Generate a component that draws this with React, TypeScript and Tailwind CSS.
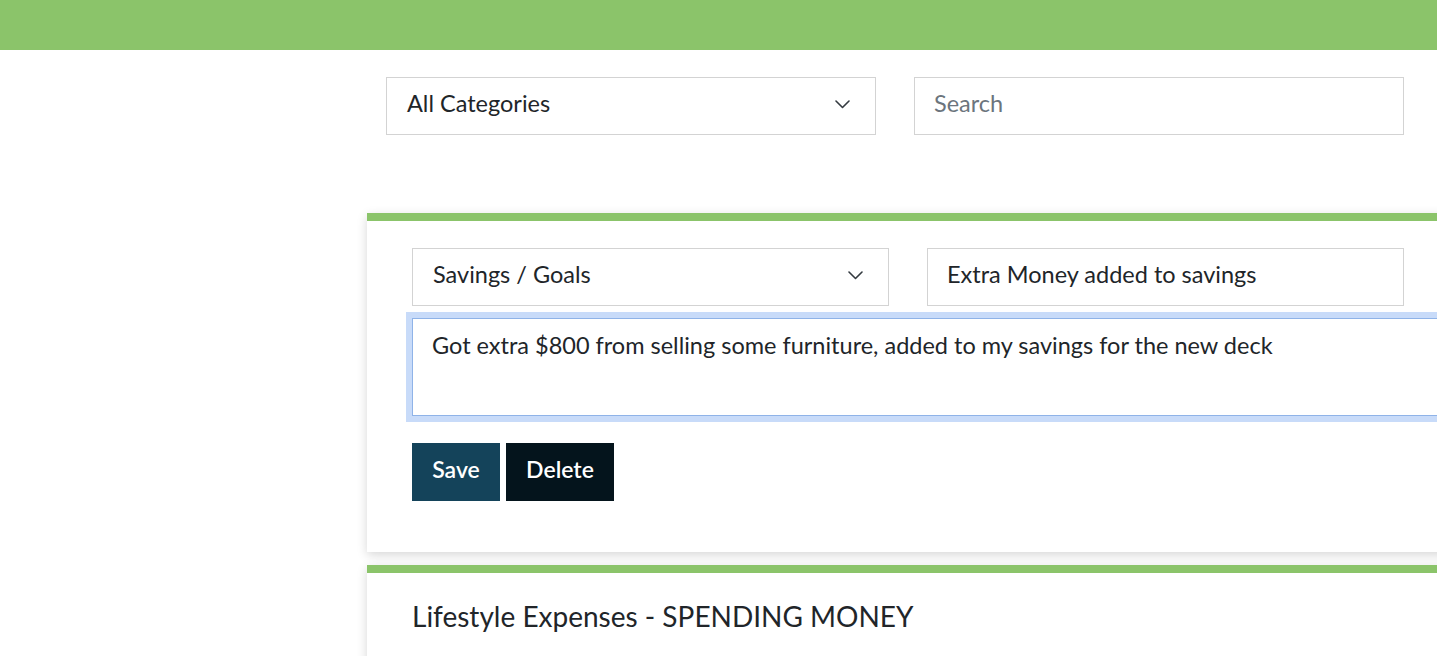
import { FC, ReactNode } from "react"

const Chevron = () => (
  <svg width="15" height="9" viewBox="0 0 15 9" fill="none" className="shrink-0">
    <polyline points="1,1 7.5,7.5 14,1" stroke="#343a40" strokeWidth="1.6" strokeLinecap="round" strokeLinejoin="round" />
  </svg>
)

const SelectBox: FC<{ label: string; width: string }> = ({ label, width }) => (
  <div
    className={`flex h-[58px] ${width} shrink-0 items-center justify-between border border-[#d3d3d3] bg-white pb-[4px] pl-[20px] pr-[25px] text-[23.5px]`}
  >
    <span>{label}</span>
    <Chevron />
  </div>
)

const TextBox: FC<{ children: ReactNode; width: string; muted?: boolean }> = ({ children, width, muted }) => (
  <div
    className={`flex h-[58px] ${width} shrink-0 items-center border border-[#d3d3d3] bg-white px-[19px] pb-[4px] text-[23.5px] ${muted ? "text-[#6c757d]" : ""}`}
  >
    {children}
  </div>
)

export default function App() {
  return (
    <div className="h-[656px] w-full overflow-hidden bg-white font-['Lato','Noto_Sans',sans-serif] text-[#212529]">
      <header className="h-[50px] bg-[#8bc46a]" />

      <div className="flex">
        <aside className="w-[367px] shrink-0" />

        <main className="w-[1200px] shrink-0">
          <div className="flex gap-[38px] pl-[19px] pt-[27px]">
            <SelectBox label="All Categories" width="w-[490px]" />
            <TextBox width="w-[490px]" muted>
              Search
            </TextBox>
          </div>

          <section className="mt-[78px] border-t-[8px] border-[#8bc46a] bg-white px-[45px] pb-[51px] pt-[27px] shadow-[0_3px_10px_rgba(0,0,0,0.16)]">
            <div className="flex gap-[38px]">
              <SelectBox label="Savings / Goals" width="w-[477px]" />
              <TextBox width="w-[477px]">Extra Money added to savings</TextBox>
            </div>

            <div className="mt-[12px] h-[98px] w-full border border-[#8fb3e8] bg-white px-[19px] pt-[9px] text-[23.5px] leading-[1.5] shadow-[0_0_0_6px_#c8dbf9]">
              Got extra $800 from selling some furniture, added to my savings for the new deck
            </div>

            <div className="mt-[27px] flex gap-[6px]">
              <button className="h-[58px] w-[88px] bg-[#14435a] pb-[5px] text-[23px] font-semibold text-white">
                Save
              </button>
              <button className="h-[58px] w-[108px] bg-[#04141c] pb-[5px] text-[23px] font-semibold text-white">
                Delete
              </button>
            </div>
          </section>

          <section className="mt-[13px] border-t-[8px] border-[#8bc46a] bg-white px-[45px] pt-[27px] shadow-[0_3px_10px_rgba(0,0,0,0.16)]">
            <h2 className="text-[28px] leading-[1.2]">Lifestyle Expenses - SPENDING MONEY</h2>
            <div className="h-[60px]" />
          </section>
        </main>
      </div>
    </div>
  )
}
